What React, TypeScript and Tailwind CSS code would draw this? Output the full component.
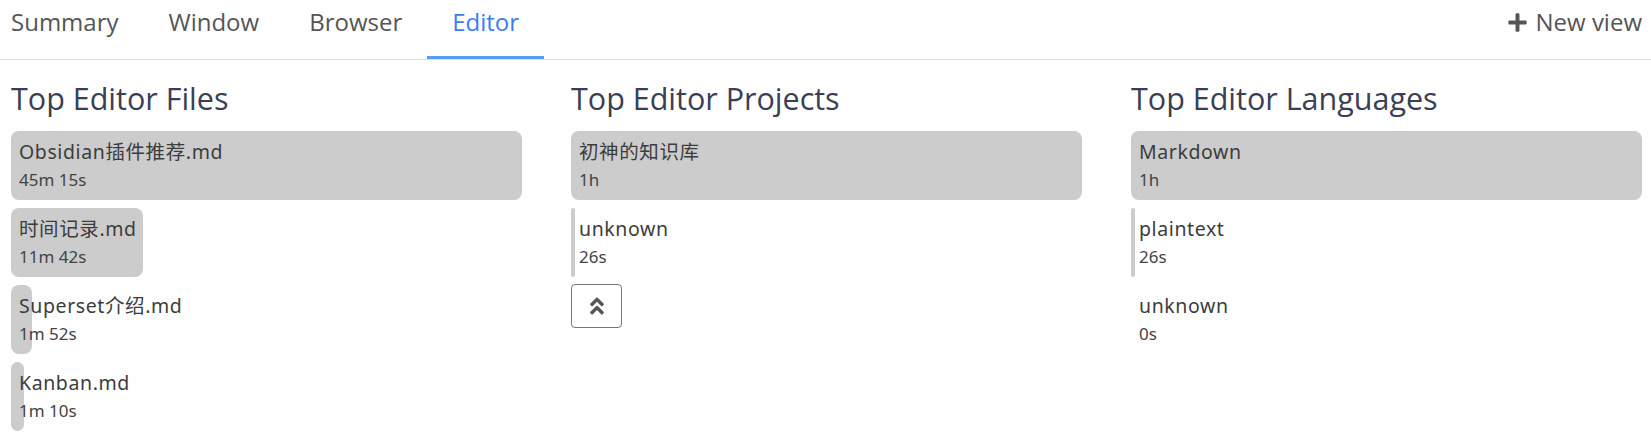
import React, { useState } from 'react'
import { FaPlus, FaAngleDoubleUp } from 'react-icons/fa'

interface Entry {
    name: string
    seconds: number
}

const tabs = ['Summary', 'Window', 'Browser', 'Editor']

const files: Entry[] = [
    { name: 'Obsidian插件推荐.md', seconds: 2715 },
    { name: '时间记录.md', seconds: 702 },
    { name: 'Superset介绍.md', seconds: 112 },
    { name: 'Kanban.md', seconds: 70 },
]

const projects: Entry[] = [
    { name: '初神的知识库', seconds: 3600 },
    { name: 'unknown', seconds: 26 },
]

const languages: Entry[] = [
    { name: 'Markdown', seconds: 3600 },
    { name: 'plaintext', seconds: 26 },
    { name: 'unknown', seconds: 0 },
]

const formatDuration = (s: number) => {
    const h = Math.floor(s / 3600)
    const m = Math.floor((s % 3600) / 60)
    const sec = s % 60
    const parts: string[] = []
    if (h) parts.push(`${h}h`)
    if (m) parts.push(`${m}m`)
    if (sec || parts.length === 0) parts.push(`${sec}s`)
    return parts.join(' ')
}

const TopList: React.FC<{ title: string; entries: Entry[]; collapsible?: boolean }> = ({
    title,
    entries,
    collapsible,
}) => {
    const max = Math.max(...entries.map(e => e.seconds), 1)
    return (
        <div className="min-w-0">
            <h2 className="text-[30.5px] leading-[36px] text-[#3a3f55] mb-[15px]">{title}</h2>
            <div className="flex flex-col gap-[8px]">
                {entries.map(e => (
                    <div key={e.name} className="relative h-[69px]">
                        {e.seconds > 0 && (
                            <div
                                className="absolute left-0 top-0 h-full rounded-lg bg-[#cccccc]"
                                style={{ width: `${(e.seconds / max) * 100}%`, minWidth: 3 }}
                            />
                        )}
                        <div className="relative pl-[8px] pt-[7px] text-[#3c3c3c] font-['Noto_Sans','Noto_Sans_CJK_SC',sans-serif]">
                            <div className="text-[19.5px] leading-[28px] tracking-[0.6px] whitespace-nowrap">
                                {e.name}
                            </div>
                            <div className="text-[17px] leading-[24px] mt-[2px] text-[#444]">
                                {formatDuration(e.seconds)}
                            </div>
                        </div>
                    </div>
                ))}
            </div>
            {collapsible && (
                <button className="mt-[7px] w-[51px] h-[44px] flex items-center justify-center rounded border border-[#777] text-[#555] bg-white">
                    <FaAngleDoubleUp size={22} />
                </button>
            )}
        </div>
    )
}

export default function App() {
    const [active, setActive] = useState('Editor')
    return (
        <div className="w-[1651px] h-[433px] bg-white overflow-hidden font-['Open_Sans',sans-serif]">
            <div className="flex justify-between border-b border-[#dddddd] h-[60px]">
                <div className="flex pl-[11px] h-full">
                    {tabs.map((t, i) => (
                        <button
                            key={t}
                            onClick={() => setActive(t)}
                            className={`h-full flex items-start pt-[6px] text-[24px] leading-[32px] border-b-[3px] ${
                                i === 0 ? 'pl-0 pr-[25px]' : 'px-[25px]'
                            } ${
                                active === t
                                    ? 'text-[#3b7cf6] border-[#5b9bf5]'
                                    : 'text-[#555555] border-transparent'
                            }`}
                        >
                            {t}
                        </button>
                    ))}
                </div>
                <button className="flex items-start pt-[6px] gap-[8px] pr-[9px] text-[24px] leading-[32px] text-[#555555]">
                    <FaPlus size={21} className="mt-[6px]" />
                    New view
                </button>
            </div>
            <div className="grid grid-cols-3 gap-x-[49px] pl-[11px] pr-[9px] pt-[20px]">
                <TopList title="Top Editor Files" entries={files} />
                <TopList title="Top Editor Projects" entries={projects} collapsible />
                <TopList title="Top Editor Languages" entries={languages} />
            </div>
        </div>
    )
}
